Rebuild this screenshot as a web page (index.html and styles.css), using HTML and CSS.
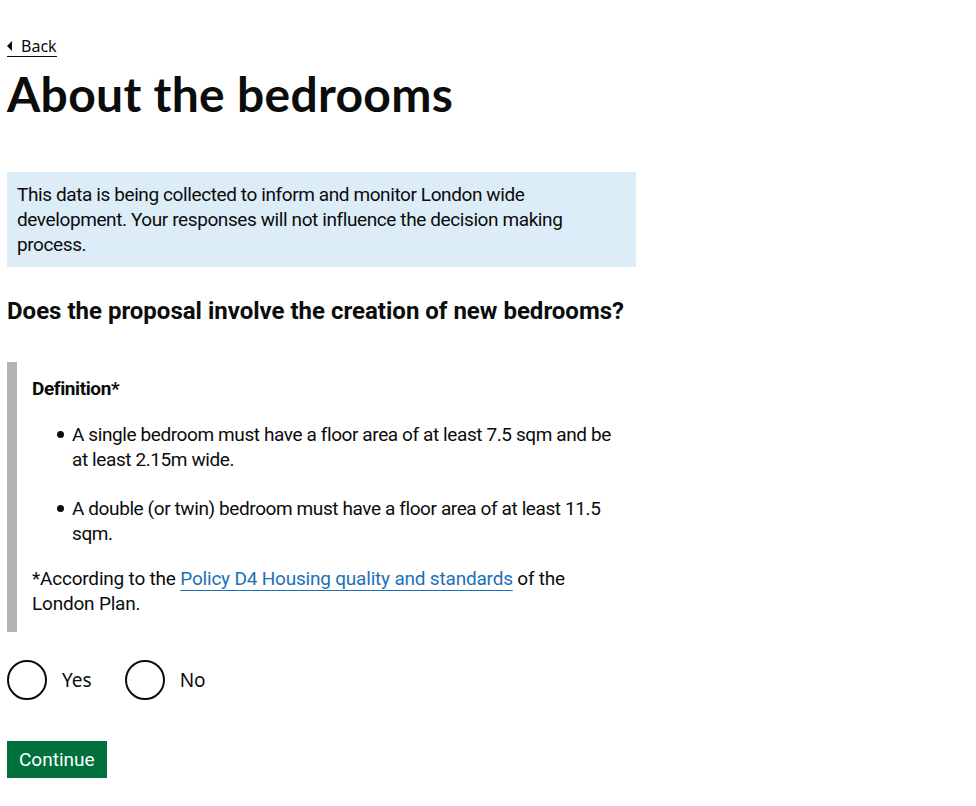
FILE: index.html
```html
<!DOCTYPE html>
<html lang="en">
<head>
<meta charset="utf-8">
<title>About the bedrooms</title>
<link rel="stylesheet" href="styles.css">
</head>
<body>
<main class="page">
  <a class="back-link" href="#">Back</a>
  <h1 class="title">About the bedrooms</h1>
  <div class="notice">
    This data is being collected to inform and monitor London wide development. Your responses will not influence the decision making process.
  </div>
  <h2 class="question">Does the proposal involve the creation of new bedrooms?</h2>
  <div class="inset">
    <p class="inset-heading">Definition*</p>
    <ul class="bullets">
      <li>A single bedroom must have a floor area of at least 7.5 sqm and be at least 2.15m wide.</li>
      <li>A double (or twin) bedroom must have a floor area of at least 11.5 sqm.</li>
    </ul>
    <p class="inset-note">*According to the <a class="link" href="#">Policy D4 Housing quality and standards</a> of the London Plan.</p>
  </div>
  <div class="radios">
    <label class="radio"><span class="radio-circle"></span><span class="radio-label">Yes</span></label>
    <label class="radio"><span class="radio-circle"></span><span class="radio-label">No</span></label>
  </div>
  <button class="button" type="button">Continue</button>
</main>
</body>
</html>
```

FILE: styles.css
```css
html, body {
  margin: 0;
  padding: 0;
  background: #ffffff;
}
body {
  font-family: Roboto, "Liberation Sans", sans-serif;
  color: #0b0c0c;
}
.page {
  padding: 36px 7px 0 7px;
  display: flex;
  flex-direction: column;
  align-items: flex-start;
}
.back-link {
  font-family: "Noto Sans", sans-serif;
  font-size: 16px;
  line-height: 20px;
  color: #0b0c0c;
  text-decoration: none;
  border-bottom: 1px solid #0b0c0c;
  padding-left: 14px;
  position: relative;
}
.back-link::before {
  content: "";
  position: absolute;
  left: 0;
  top: 5px;
  border-style: solid;
  border-width: 5px 5px 5px 0;
  border-color: transparent #0b0c0c transparent transparent;
}
.title {
  font-family: Lato, "Noto Sans", sans-serif;
  font-weight: 700;
  font-size: 48px;
  line-height: 50px;
  letter-spacing: 0.3px;
  margin: 12px 0 0 0;
}
.notice {
  box-sizing: border-box;
  width: 629px;
  margin-top: 53px;
  padding: 10px 10px;
  background: #ddedf8;
  font-size: 19px;
  line-height: 25px;
  letter-spacing: -0.4px;
}
.question {
  font-family: Roboto, sans-serif;
  font-weight: 700;
  font-size: 24px;
  line-height: 30px;
  margin: 29px 0 0 0;
}
.inset {
  box-sizing: border-box;
  width: 629px;
  margin-top: 36px;
  border-left: 10px solid #b1b4b6;
  padding: 14px 15px 16px 15px;
  font-size: 19px;
  line-height: 25px;
  letter-spacing: -0.4px;
}
.inset-heading {
  margin: 0;
  font-weight: 700;
}
.bullets {
  margin: 21px 0 0 0;
  padding-left: 40px;
  list-style: none;
}
.bullets li {
  position: relative;
}
.bullets li::before {
  content: "";
  position: absolute;
  left: -15px;
  top: 9px;
  width: 7px;
  height: 7px;
  border-radius: 50%;
  background: #0b0c0c;
}
.bullets li + li {
  margin-top: 24px;
}
.inset-note {
  margin: 20px 0 0 0;
  letter-spacing: -0.2px;
}
.link {
  color: #1d70b8;
  text-decoration: underline;
  text-decoration-thickness: 1px;
  text-underline-offset: 5px;
}
.radios {
  display: flex;
  gap: 33px;
  margin-top: 28px;
}
.radio {
  display: flex;
  align-items: center;
  gap: 15px;
}
.radio-circle {
  box-sizing: border-box;
  width: 40px;
  height: 40px;
  border: 2px solid #0b0c0c;
  border-radius: 50%;
}
.radio-label {
  font-family: "Noto Sans", sans-serif;
  font-size: 19px;
  line-height: 25px;
}
.button {
  margin-top: 41px;
  font-family: Roboto, sans-serif;
  font-size: 19px;
  line-height: 19px;
  color: #ffffff;
  background: #00703c;
  border: 0;
  border-radius: 0;
  box-shadow: 0 2px 0 #002d18;
  padding: 9px 12px 9px 12px;
  cursor: pointer;
}
```
